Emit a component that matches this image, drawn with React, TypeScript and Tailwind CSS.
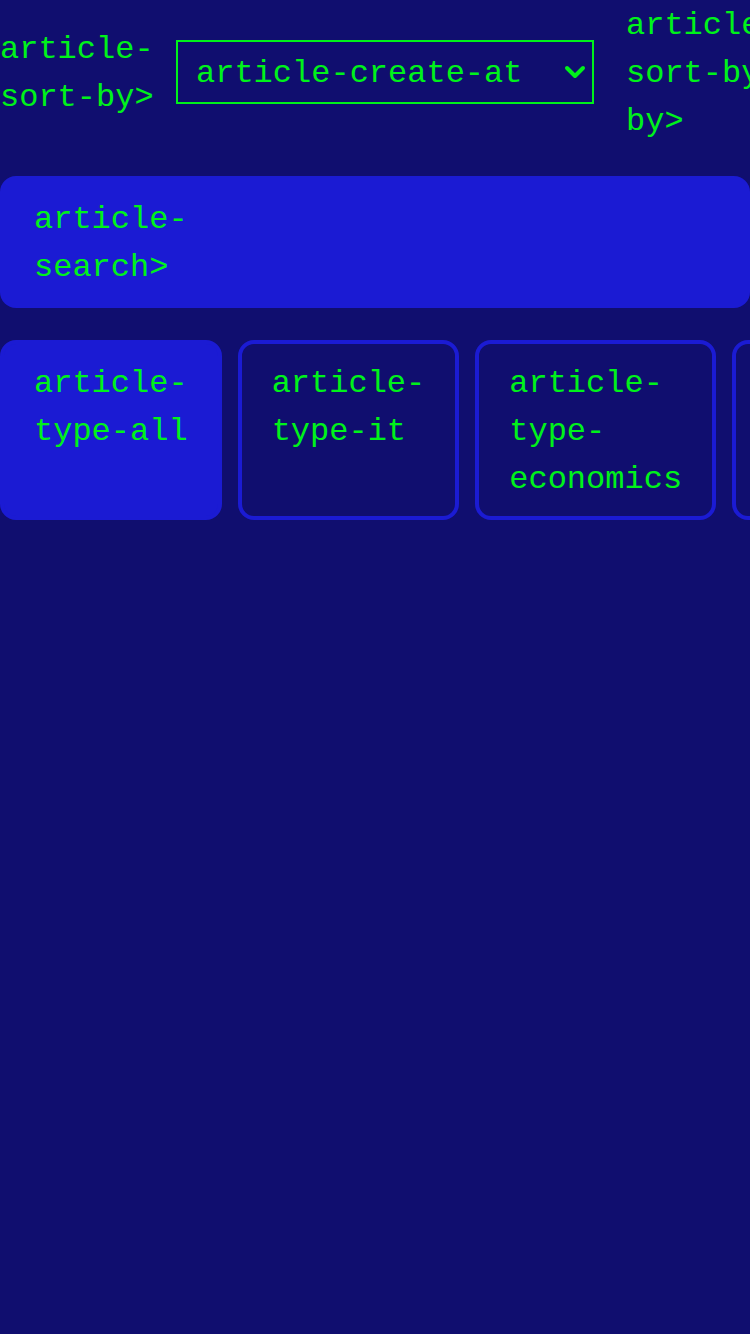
import { ChevronDown } from "lucide-react";

const tabs = [
  { label: "article-type-all", active: true },
  { label: "article-type-it", active: false },
  { label: "article-type-economics", active: false },
  { label: "article-type-sports", active: false },
];

const App = () => {
  return (
    <div className="min-h-screen w-full overflow-hidden bg-[#100e6f] text-[#00f21a] font-['Liberation_Mono','DejaVu_Sans_Mono',monospace] text-[32px] leading-[48px]">
      <div className="flex flex-col gap-8">
        {/* sort row */}
        <div className="flex items-center h-[144px]">
          <span className="w-[154px] shrink-0 pt-[3px]">article-sort-by&gt;</span>
          <div className="relative ml-[22px] w-[418px] shrink-0">
            <select
              defaultValue="create"
              className="w-full h-16 appearance-none bg-transparent border-2 border-[#00f21a] pl-[18px] pr-10 pt-[3px] outline-none rounded-none"
            >
              <option value="create">article-create-at</option>
              <option value="update">article-update-at</option>
            </select>
            <ChevronDown
              className="absolute right-[3px] top-1/2 -translate-y-1/2 pointer-events-none"
              size={32}
              strokeWidth={3}
            />
          </div>
          <span className="ml-8 w-[154px] shrink-0 pt-[3px]">article-sort-by-by&gt;</span>
        </div>

        {/* search */}
        <div className="flex items-center w-[750px] rounded-2xl bg-[#1b1bd3] px-[34px] pt-[20px] pb-[16px]">
          <label className="w-[154px] shrink-0">article-search&gt;</label>
          <input className="flex-1 min-w-0 bg-transparent outline-none" />
        </div>

        {/* type tabs */}
        <div className="flex gap-4">
          {tabs.map((t) => (
            <button
              key={t.label}
              className={
                "shrink-0 w-min text-left flex items-start rounded-2xl border-4 border-[#1b1bd3] px-[30px] pt-[16px] pb-[12px] " +
                (t.active ? "bg-[#1b1bd3]" : "bg-transparent")
              }
            >
              <span className="w-min">{t.label}</span>
            </button>
          ))}
        </div>
      </div>
    </div>
  );
};

export default App;
